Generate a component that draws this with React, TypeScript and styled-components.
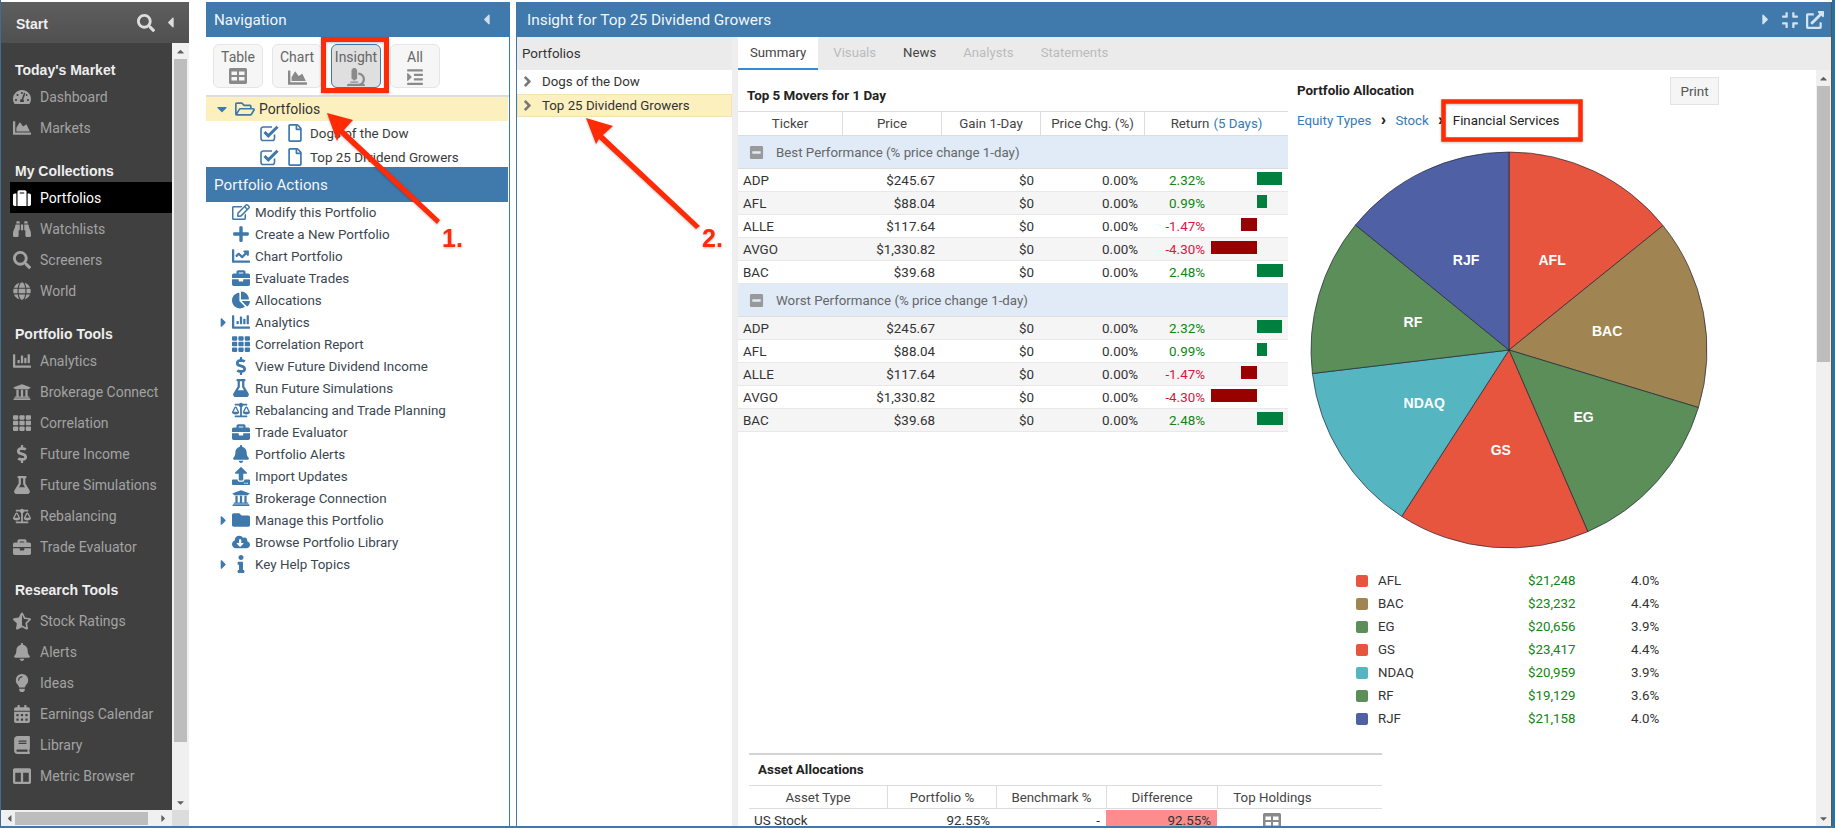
import React from 'react';
import styled, {createGlobalStyle} from 'styled-components';
import {
    FaBalanceScale, FaBell, FaBinoculars, FaBook, FaBriefcase, FaCalendarAlt, FaCaretDown, FaCaretLeft, FaCaretRight,
    FaCaretUp, FaChartArea, FaChartBar, FaChartLine, FaChartPie, FaAngleRight, FaCloudDownloadAlt, FaColumns, FaCompress,
    FaDollarSign, FaExternalLinkAlt, FaFlask, FaFolder, FaGlobe, FaIndent, FaInfo, FaLightbulb, FaMicroscope,
    FaMinusSquare, FaPlus, FaRegEdit, FaRegFile, FaRegFolderOpen, FaSearch, FaStarHalfAlt, FaSuitcase,
    FaTachometerAlt, FaTh, FaUniversity, FaUpload,
} from 'react-icons/fa';

const TableIcon = ({size = 18}: {size?: number}) => (
    <svg width={size} height={size * 0.89} viewBox="0 0 18 16" fill="currentColor">
        <path
            fillRule="evenodd"
            d="M1.5 0h15A1.5 1.5 0 0 1 18 1.5v13a1.5 1.5 0 0 1-1.5 1.5h-15A1.5 1.5 0 0 1 0 14.5v-13A1.5 1.5 0 0 1 1.5 0zM2.5 3.5v3.5h5.5v-3.5zM10 3.5v3.5h5.5v-3.5zM2.5 9v3.5h5.5V9zM10 9v3.5h5.5V9z"
        />
    </svg>
);

// the old open-cornered check box, the package only has the closed one
const CheckBoxIcon = () => (
    <svg width="19" height="18" viewBox="0 0 19 18" fill="none" stroke="currentColor">
        <path strokeWidth="1.6" d="M14.5 10.5v3.7a2.3 2.3 0 0 1-2.3 2.300H3.300A2.300 2.300 0 0 1 1 14.200V5.300A2.300 2.300 0 0 1 3.300 3H12"/>
        <path strokeWidth="3" d="M4.500 8l3.800 3.800L17.500 2.800"/>
    </svg>
);

const sideSections = [
    {title: "Today's Market", items: [['Dashboard', FaTachometerAlt], ['Markets', FaChartArea]]},
    {
        title: 'My Collections',
        items: [['Portfolios', FaSuitcase], ['Watchlists', FaBinoculars], ['Screeners', FaSearch], ['World', FaGlobe]],
    },
    {
        title: 'Portfolio Tools',
        items: [
            ['Analytics', FaChartBar], ['Brokerage Connect', FaUniversity], ['Correlation', FaTh],
            ['Future Income', FaDollarSign], ['Future Simulations', FaFlask], ['Rebalancing', FaBalanceScale],
            ['Trade Evaluator', FaBriefcase],
        ],
    },
    {
        title: 'Research Tools',
        items: [
            ['Stock Ratings', FaStarHalfAlt], ['Alerts', FaBell], ['Ideas', FaLightbulb],
            ['Earnings Calendar', FaCalendarAlt], ['Library', FaBook], ['Metric Browser', FaColumns],
        ],
    },
] as {title: string; items: [string, React.ComponentType][]}[];

const actions = [
    ['Modify this Portfolio', FaRegEdit, false],
    ['Create a New Portfolio', FaPlus, false],
    ['Chart Portfolio', FaChartLine, false],
    ['Evaluate Trades', FaBriefcase, false],
    ['Allocations', FaChartPie, false],
    ['Analytics', FaChartBar, true],
    ['Correlation Report', FaTh, false],
    ['View Future Dividend Income', FaDollarSign, false],
    ['Run Future Simulations', FaFlask, false],
    ['Rebalancing and Trade Planning', FaBalanceScale, false],
    ['Trade Evaluator', FaBriefcase, false],
    ['Portfolio Alerts', FaBell, false],
    ['Import Updates', FaUpload, false],
    ['Brokerage Connection', FaUniversity, false],
    ['Manage this Portfolio', FaFolder, true],
    ['Browse Portfolio Library', FaCloudDownloadAlt, false],
    ['Key Help Topics', FaInfo, true],
] as [string, React.ComponentType, boolean][];

const movers = [
    ['ADP', '$245.67', 2.32],
    ['AFL', '$88.04', 0.99],
    ['ALLE', '$117.64', -1.47],
    ['AVGO', '$1,330.82', -4.3],
    ['BAC', '$39.68', 2.48],
] as [string, string, number][];

const slices = [
    {name: 'AFL', value: 21248, amount: '$21,248', pct: '4.0%', color: '#e8553e'},
    {name: 'BAC', value: 23232, amount: '$23,232', pct: '4.4%', color: '#a08552'},
    {name: 'EG', value: 20656, amount: '$20,656', pct: '3.9%', color: '#5c8e5a'},
    {name: 'GS', value: 23417, amount: '$23,417', pct: '4.4%', color: '#e8553e'},
    {name: 'NDAQ', value: 20959, amount: '$20,959', pct: '3.9%', color: '#55b5c0'},
    {name: 'RF', value: 19129, amount: '$19,129', pct: '3.6%', color: '#5c8e5a'},
    {name: 'RJF', value: 21158, amount: '$21,158', pct: '4.0%', color: '#5060a5'},
];

const PieChart = () => {
    const total = slices.reduce((sum, s) => sum + s.value, 0);
    const radius = 198;
    const center = 201;
    let start = 0;
    return (
        <PieSvg viewBox="0 0 402 402">
            {slices.map((s) => {
                const sweep = (s.value / total) * Math.PI * 2;
                const end = start + sweep;
                const mid = start + sweep / 2;
                const x1 = center + radius * Math.sin(start);
                const y1 = center - radius * Math.cos(start);
                const x2 = center + radius * Math.sin(end);
                const y2 = center - radius * Math.cos(end);
                start = end;
                return (
                    <g key={s.name}>
                        <path
                            d={`M${center} ${center}L${x1} ${y1}A${radius} ${radius} 0 0 1 ${x2} ${y2}Z`}
                            fill={s.color}
                            stroke="rgba(30,30,50,.65)"
                            strokeWidth="1"
                        />
                        <PieLabel x={center + 100 * Math.sin(mid)} y={center - 100 * Math.cos(mid) + 5}>
                            {s.name}
                        </PieLabel>
                    </g>
                );
            })}
        </PieSvg>
    );
};

const MoverRows = ({startShaded}: {startShaded: boolean}) => (
    <>
        {movers.map(([ticker, price, change], i) => (
            <DataRow key={ticker} $shaded={i % 2 === 0 ? startShaded : !startShaded}>
                <TickerCell>{ticker}</TickerCell>
                <NumCell>{price}</NumCell>
                <NumCell>$0</NumCell>
                <NumCell>0.00%</NumCell>
                <ReturnCell>
                    <ReturnValue $negative={change < 0}>{change.toFixed(2)}%</ReturnValue>
                    <BarSide $left>{change < 0 && <Bar $negative style={{width: -change * 10.7}}/>}</BarSide>
                    <BarSide>{change > 0 && <Bar style={{width: change * 10.6}}/>}</BarSide>
                </ReturnCell>
            </DataRow>
        ))}
    </>
);

const App = () => {
    return (
        <Root>
            <GlobalStyle/>
            <Sidebar>
                <SideHeader>
                    <StartLabel>Start</StartLabel>
                    <FaSearch size={18}/>
                    <SideCollapse><FaCaretLeft size={17}/></SideCollapse>
                </SideHeader>
                <SideBody>
                    <SideList>
                        {sideSections.map((section, i) => (
                            <SideSection key={section.title}>
                                <SideTitle $tall={i === 3}>{section.title}</SideTitle>
                                {section.items.map(([label, Icon]) => (
                                    <SideItem key={label} $active={label === 'Portfolios'}>
                                        <SideIcon><Icon/></SideIcon>
                                        {label}
                                    </SideItem>
                                ))}
                            </SideSection>
                        ))}
                    </SideList>
                    <VScroll>
                        <ScrollArrow><FaCaretUp size={11}/></ScrollArrow>
                        <SideThumb/>
                        <ScrollArrow><FaCaretDown size={11}/></ScrollArrow>
                    </VScroll>
                </SideBody>
                <HScroll>
                    <HTrack>
                        <FaCaretLeft size={11}/>
                        <HThumb/>
                        <FaCaretRight size={11}/>
                    </HTrack>
                    <ScrollCorner/>
                </HScroll>
            </Sidebar>

            <NavPanel>
                <NavHeader>
                    Navigation
                    <HeaderCaret><FaCaretLeft size={17}/></HeaderCaret>
                </NavHeader>
                <ViewButtons>
                    <ViewButton>Table<TableIcon/></ViewButton>
                    <ViewButton>Chart<FaChartArea size={19}/></ViewButton>
                    <ViewButton $active>Insight<FaMicroscope size={18}/></ViewButton>
                    <ViewButton>All<FaIndent size={18}/></ViewButton>
                </ViewButtons>
                <TreeRoot>
                    <TreeCaret><FaCaretDown size={16}/></TreeCaret>
                    <FaRegFolderOpen size={20}/>
                    <span>Portfolios</span>
                </TreeRoot>
                <TreeChildren>
                    <TreeChild><CheckBoxIcon/><FaRegFile size={18}/><span>Dogs of the Dow</span></TreeChild>
                    <TreeChild><CheckBoxIcon/><FaRegFile size={18}/><span>Top 25 Dividend Growers</span></TreeChild>
                </TreeChildren>
                <ActionsHeader>Portfolio Actions</ActionsHeader>
                <ActionList>
                    {actions.map(([label, Icon, expandable]) => (
                        <ActionRow key={label}>
                            <ActionCaret>{expandable && <FaCaretRight size={15}/>}</ActionCaret>
                            <ActionIcon><Icon/></ActionIcon>
                            {label}
                        </ActionRow>
                    ))}
                </ActionList>
            </NavPanel>

            <MainPanel>
                <MainHeader>
                    Insight for Top 25 Dividend Growers
                    <MainHeaderIcons>
                        <FaCaretRight size={17}/>
                        <FaCompress size={18}/>
                        <FaExternalLinkAlt size={18}/>
                    </MainHeaderIcons>
                </MainHeader>
                <MainRow>
                    <SubPanel>
                        <SubHeader>Portfolios</SubHeader>
                        <SubRow><FaAngleRight size={17}/>Dogs of the Dow</SubRow>
                        <SubRow $selected><FaAngleRight size={17}/>Top 25 Dividend Growers</SubRow>
                    </SubPanel>
                    <Splitter/>
                    <ContentColumn>
                        <Tabs>
                            <Tab $state="active">Summary</Tab>
                            <Tab $state="disabled">Visuals</Tab>
                            <Tab>News</Tab>
                            <Tab $state="disabled">Analysts</Tab>
                            <Tab $state="disabled">Statements</Tab>
                        </Tabs>
                        <ContentBody>
                            <ContentScroll>
                                <TopRow>
                                    <MoversColumn>
                                        <SectionTitle>Top 5 Movers for 1 Day</SectionTitle>
                                        <HeadRow>
                                            <HeadCell>Ticker</HeadCell>
                                            <HeadCell>Price</HeadCell>
                                            <HeadCell>Gain 1-Day</HeadCell>
                                            <HeadCell>Price Chg. (%)</HeadCell>
                                            <HeadCell>Return <LinkText>(5 Days)</LinkText></HeadCell>
                                        </HeadRow>
                                        <GroupRow><FaMinusSquare size={15}/>Best Performance (% price change 1-day)</GroupRow>
                                        <MoverRows startShaded={false}/>
                                        <GroupRow><FaMinusSquare size={15}/>Worst Performance (% price change 1-day)</GroupRow>
                                        <MoverRows startShaded/>
                                    </MoversColumn>
                                    <AllocationColumn>
                                        <AllocationTop>
                                            <AllocationTitle>Portfolio Allocation</AllocationTitle>
                                            <PrintButton>Print</PrintButton>
                                        </AllocationTop>
                                        <Crumbs>
                                            <LinkText>Equity Types</LinkText>
                                            <CrumbSep>›</CrumbSep>
                                            <LinkText>Stock</LinkText>
                                            <CrumbSep>›</CrumbSep>
                                            <span>Financial Services</span>
                                        </Crumbs>
                                        <PieChart/>
                                        <Legend>
                                            {slices.map((s) => (
                                                <LegendRow key={s.name}>
                                                    <Swatch $color={s.color}/>
                                                    <span>{s.name}</span>
                                                    <LegendAmount>{s.amount}</LegendAmount>
                                                    <span>{s.pct}</span>
                                                </LegendRow>
                                            ))}
                                        </Legend>
                                    </AllocationColumn>
                                </TopRow>
                                <AssetBlock>
                                    <AssetTitle>Asset Allocations</AssetTitle>
                                    <AssetHead>
                                        <HeadCell>Asset Type</HeadCell>
                                        <HeadCell>Portfolio %</HeadCell>
                                        <HeadCell>Benchmark %</HeadCell>
                                        <HeadCell>Difference</HeadCell>
                                        <HeadCell>Top Holdings</HeadCell>
                                    </AssetHead>
                                    <AssetRow>
                                        <TickerCell>US Stock</TickerCell>
                                        <NumCell>92.55%</NumCell>
                                        <NumCell>-</NumCell>
                                        <DiffCell>92.55%</DiffCell>
                                        <HoldingsCell><TableIcon/></HoldingsCell>
                                    </AssetRow>
                                </AssetBlock>
                            </ContentScroll>
                            <MainScroll>
                                <ScrollArrow><FaCaretUp size={11}/></ScrollArrow>
                                <MainThumb/>
                                <ScrollGap/>
                                <ScrollArrow><FaCaretDown size={11}/></ScrollArrow>
                            </MainScroll>
                        </ContentBody>
                    </ContentColumn>
                </MainRow>
            </MainPanel>

            <Annotations viewBox="0 0 1835 828">
                <rect x="323.5" y="39.5" width="63" height="51" fill="none" stroke="#ff2a06" strokeWidth="5"/>
                <rect x="1443.5" y="101.5" width="137" height="38" fill="none" stroke="#ff2a06" strokeWidth="4.5"/>
                <polygon points="327,113 353,120 344,130 440,220 437,224 340,134 337,141" fill="#ff2a06"/>
                <polygon points="586,118 613,126 603,135 700,226 696,229 599,139 596,144" fill="#ff2a06"/>
                <AnnotationLabel x="442" y="247">1.</AnnotationLabel>
                <AnnotationLabel x="702" y="247">2.</AnnotationLabel>
            </Annotations>
        </Root>
    );
};

export default App;

const GlobalStyle = createGlobalStyle`
  html, body {
    margin: 0;
    padding: 0;
    background: #fff;
  }
  * {
    box-sizing: border-box;
  }
`;

const Root = styled.div`
  position: relative;
  width: 1835px;
  height: 828px;
  display: flex;
  padding-top: 2px;
  border-left: 1px solid #3a7090;
  border-right: 3px solid #2f7095;
  border-bottom: 2px solid #3f78ab;
  overflow: hidden;
  font-family: Roboto, "Liberation Sans", sans-serif;
  font-size: 13px;
  color: #333;
  background: #fff;
`;

const Sidebar = styled.div`
  width: 188px;
  flex: none;
  display: flex;
  flex-direction: column;
  background: #404040;
`;

const SideHeader = styled.div`
  height: 41px;
  flex: none;
  display: flex;
  align-items: center;
  padding: 0 10px 0 15px;
  background: linear-gradient(#5e5e5e, #505050);
  color: #ddd;
`;

const StartLabel = styled.div`
  flex: 1;
  font-family: "Liberation Sans", sans-serif;
  font-size: 14px;
  font-weight: 700;
  color: #eee;
  padding-top: 2px;
`;

const SideCollapse = styled.span`
  display: flex;
  margin-left: 7px;
`;

const SideBody = styled.div`
  flex: 1;
  min-height: 0;
  display: flex;
`;

const SideList = styled.div`
  width: 171px;
  flex: none;
  padding-top: 15px;
  overflow: hidden;
`;

const SideSection = styled.div`
  margin-bottom: 16px;
`;

const SideTitle = styled.div<{$tall?: boolean}>`
  height: ${(p) => (p.$tall ? 27 : 23)}px;
  padding: ${(p) => (p.$tall ? '0 0 4px 14px' : '0 0 0 14px')};
  display: flex;
  align-items: center;
  font-family: "Liberation Sans", sans-serif;
  font-size: 14px;
  font-weight: 700;
  color: #eee;
`;

const SideItem = styled.div<{$active?: boolean}>`
  height: 31px;
  margin-left: ${(p) => (p.$active ? 9 : 0)}px;
  padding-left: ${(p) => (p.$active ? 3 : 12)}px;
  display: flex;
  align-items: center;
  font-size: 14px;
  white-space: nowrap;
  color: ${(p) => (p.$active ? '#fff' : '#a3a3a3')};
  background: ${(p) => (p.$active ? '#000' : 'transparent')};
`;

const SideIcon = styled.span`
  width: 18px;
  margin-right: 9px;
  display: flex;
  justify-content: center;
  font-size: 18px;
  svg {
    flex: none;
  }
`;

const VScroll = styled.div`
  width: 17px;
  flex: none;
  display: flex;
  flex-direction: column;
  align-items: center;
  background: #f0f0f0;
`;

const ScrollArrow = styled.div`
  height: 16px;
  flex: none;
  display: flex;
  align-items: center;
  justify-content: center;
  color: #606060;
`;

const SideThumb = styled.div`
  width: 13px;
  flex: 1;
  margin-bottom: 52px;
  background: #bdbdbd;
`;

const HScroll = styled.div`
  height: 16px;
  flex: none;
  display: flex;
`;

const HTrack = styled.div`
  width: 171px;
  display: flex;
  align-items: center;
  justify-content: space-between;
  padding: 0 3px;
  color: #606060;
  background: #f0f0f0;
`;

const HThumb = styled.div`
  width: 136px;
  height: 13px;
  margin-right: 10px;
  background: #bdbdbd;
`;

const ScrollCorner = styled.div`
  width: 17px;
  background: #dcdcdc;
`;

const NavPanel = styled.div`
  width: 304px;
  flex: none;
  margin-left: 17px;
  display: flex;
  flex-direction: column;
  border-right: 1px solid #3f78ab;
`;

const PanelHeader = styled.div`
  height: 35px;
  flex: none;
  display: flex;
  align-items: center;
  justify-content: space-between;
  padding: 0 10px;
  font-size: 15.2px;
  color: #f2f6fa;
  background: #4079ab;
`;

const NavHeader = styled(PanelHeader)`
  padding-left: 8px;
`;

const MainHeader = styled(PanelHeader)`
  font-size: 15.4px;
`;

const HeaderCaret = styled.span`
  display: flex;
  margin-right: 4px;
  color: #cfdeec;
`;

const ViewButtons = styled.div`
  height: 60px;
  flex: none;
  display: flex;
  gap: 9px;
  padding: 7px 0 0 7px;
  border-bottom: 2px solid #ddd;
`;

const ViewButton = styled.div<{$active?: boolean}>`
  width: 50px;
  height: 44px;
  display: flex;
  flex-direction: column;
  align-items: center;
  gap: 3px;
  padding-top: 4px;
  font-size: 14px;
  line-height: 16px;
  color: #666;
  border-radius: 6px;
  border: 1px solid ${(p) => (p.$active ? '#3f78ab' : '#e5e5e5')};
  background: ${(p) => (p.$active ? '#dfdfdf' : '#f6f6f6')};
  svg {
    color: #8a8a8a;
  }
`;

const TreeRoot = styled.div`
  height: 24px;
  flex: none;
  display: flex;
  align-items: center;
  padding-left: 4px;
  font-size: 14px;
  color: #333;
  background: #fdf0bf;
  margin-right: 1px;
  svg {
    color: #3f78ab;
  }
  span {
    margin-left: 4px;
  }
`;

const TreeCaret = styled.span`
  display: flex;
  width: 21px;
`;

const TreeChildren = styled.div`
  height: 46px;
  flex: none;
`;

const TreeChild = styled.div`
  height: 24px;
  display: flex;
  align-items: center;
  padding-left: 54px;
  font-size: 13.4px;
  color: #3a3a3a;
  svg {
    color: #3f78ab;
  }
  svg + svg {
    margin-left: 7px;
  }
  span {
    margin-left: 6px;
  }
`;

const ActionsHeader = styled(NavHeader)`
  margin-right: 1px;
`;

const ActionList = styled.div`
  margin-top: -1px;
`;

const ActionRow = styled.div`
  height: 22px;
  display: flex;
  align-items: center;
  padding-left: 10px;
  font-size: 13.4px;
  color: #3a4650;
  white-space: nowrap;
`;

const ActionCaret = styled.span`
  width: 15px;
  display: flex;
  color: #3f78ab;
`;

const ActionIcon = styled.span`
  width: 19px;
  margin-right: 5px;
  display: flex;
  justify-content: center;
  font-size: 18px;
  color: #3f78ab;
  svg {
    flex: none;
  }
`;

const MainPanel = styled.div`
  flex: 1;
  min-width: 0;
  margin-left: 6px;
  display: flex;
  flex-direction: column;
  border-left: 1px solid #3f78ab;
  border-right: 1px solid #555;
`;

const MainHeaderIcons = styled.div`
  display: flex;
  align-items: center;
  gap: 7px;
  margin-right: -3px;
  color: #d5e2ef;
`;

const MainRow = styled.div`
  flex: 1;
  min-height: 0;
  display: flex;
`;

const SubPanel = styled.div`
  width: 215px;
  flex: none;
`;

const SubHeader = styled.div`
  height: 33px;
  display: flex;
  align-items: center;
  padding: 0 0 1px 5px;
  font-size: 13.4px;
  color: #333;
  background: #ebebeb;
`;

const SubRow = styled.div<{$selected?: boolean}>`
  height: 23.5px;
  display: flex;
  align-items: center;
  gap: 6px;
  padding-left: 2px;
  font-size: 13.3px;
  color: #333;
  background: ${(p) => (p.$selected ? '#fdf0bf' : '#fff')};
  ${(p) => (p.$selected ? 'box-shadow: inset 0 0 0 1px #f3e3ae;' : '')}
  svg {
    color: #777;
  }
`;

const Splitter = styled.div`
  width: 6px;
  flex: none;
  background: #eee;
`;

const ContentColumn = styled.div`
  flex: 1;
  min-width: 0;
  display: flex;
  flex-direction: column;
`;

const Tabs = styled.div`
  height: 33px;
  flex: none;
  display: flex;
  gap: 3px;
  background: #ebebeb;
`;

const Tab = styled.div<{$state?: 'active' | 'disabled'}>`
  display: flex;
  align-items: center;
  padding: 0 12px;
  font-size: 13.2px;
  color: ${(p) => (p.$state === 'disabled' ? '#bbb' : '#444')};
  background: ${(p) => (p.$state === 'active' ? '#fff' : 'transparent')};
  border-bottom: 2px solid ${(p) => (p.$state === 'active' ? '#2e8be0' : 'transparent')};
`;

const ContentBody = styled.div`
  flex: 1;
  min-height: 0;
  display: flex;
`;

const ContentScroll = styled.div`
  flex: 1;
  min-width: 0;
  overflow: hidden;
`;

const TopRow = styled.div`
  height: 683px;
  display: flex;
`;

const MoversColumn = styled.div`
  width: 550px;
  flex: none;
`;

const SectionTitle = styled.div`
  height: 41px;
  padding: 9px 0 0 9px;
  display: flex;
  align-items: center;
  font-size: 13.4px;
  font-weight: 700;
  color: #222;
`;

const HeadRow = styled.div`
  height: 25px;
  display: grid;
  grid-template-columns: 104px 99px 99px 104px 1fr;
  border-top: 1px solid #ddd;
  border-bottom: 1px solid #ddd;
`;

const HeadCell = styled.div`
  display: flex;
  align-items: center;
  justify-content: center;
  gap: 4px;
  font-size: 13.3px;
  color: #444;
  & + & {
    border-left: 1px solid #ddd;
  }
`;

const LinkText = styled.span`
  color: #337ab7;
`;

const GroupRow = styled.div`
  height: 33px;
  display: flex;
  align-items: center;
  gap: 12px;
  padding-left: 11px;
  font-size: 13.3px;
  color: #666;
  background: #e0ebf7;
  border-bottom: 1px solid #ddd;
  svg {
    color: #999;
  }
`;

const DataRow = styled.div<{$shaded: boolean}>`
  height: 23px;
  display: grid;
  grid-template-columns: 104px 99px 99px 104px 1fr;
  font-size: 13.4px;
  color: #333;
  background: ${(p) => (p.$shaded ? '#f5f5f5' : '#fff')};
  border-bottom: 1px solid #e8e8e8;
`;

const TickerCell = styled.div`
  display: flex;
  align-items: center;
  padding-left: 5px;
`;

const NumCell = styled.div`
  display: flex;
  align-items: center;
  justify-content: flex-end;
  padding-right: 6px;
`;

const ReturnCell = styled.div`
  display: flex;
`;

const ReturnValue = styled.div<{$negative: boolean}>`
  width: 61px;
  flex: none;
  display: flex;
  align-items: center;
  justify-content: flex-end;
  color: ${(p) => (p.$negative ? '#dc143c' : '#118511')};
`;

const BarSide = styled.div<{$left?: boolean}>`
  width: ${(p) => (p.$left ? 52 : 31)}px;
  flex: none;
  display: flex;
  justify-content: ${(p) => (p.$left ? 'flex-end' : 'flex-start')};
`;

const Bar = styled.div<{$negative?: boolean}>`
  height: 13px;
  margin-top: 3px;
  background: ${(p) => (p.$negative ? '#990000' : '#00803f')};
`;

const AllocationColumn = styled.div`
  flex: 1;
  min-width: 0;
  padding: 7px 0 0 9px;
`;

const AllocationTop = styled.div`
  width: 422px;
  display: flex;
  align-items: flex-start;
  justify-content: space-between;
`;

const AllocationTitle = styled.div`
  font-size: 13.4px;
  font-weight: 700;
  color: #222;
  line-height: 28px;
`;

const PrintButton = styled.div`
  width: 49px;
  height: 28px;
  display: flex;
  align-items: center;
  justify-content: center;
  font-size: 13.5px;
  color: #555;
  background: #f5f5f5;
  border: 1px solid #e3e3e3;
`;

const Crumbs = styled.div`
  height: 30px;
  display: flex;
  align-items: center;
  font-size: 13.3px;
  color: #222;
`;

const CrumbSep = styled.span`
  width: 24px;
  text-align: center;
  font-family: "Liberation Sans", sans-serif;
  font-weight: 700;
  font-size: 16px;
  color: #222;
`;

const PieSvg = styled.svg`
  display: block;
  width: 402px;
  height: 402px;
  margin: 14px 0 0 11px;
`;

const PieLabel = styled.text`
  font-family: "Liberation Sans", sans-serif;
  font-size: 14px;
  font-weight: 700;
  fill: #fff;
  text-anchor: middle;
`;

const Legend = styled.div`
  margin: 18px 0 0 59px;
`;

const LegendRow = styled.div`
  height: 23px;
  display: grid;
  grid-template-columns: 22px 150px 103px auto;
  align-items: center;
  justify-content: start;
  font-size: 13.3px;
  color: #333;
`;

const Swatch = styled.span<{$color: string}>`
  width: 12px;
  height: 12px;
  border-radius: 2px;
  background: ${(p) => p.$color};
`;

const LegendAmount = styled.span`
  color: #118511;
`;

const AssetBlock = styled.div`
  width: 633px;
  margin-left: 11px;
  border-top: 2px solid #d4d4d4;
`;

const AssetTitle = styled.div`
  height: 28px;
  margin-bottom: 2px;
  padding-left: 9px;
  display: flex;
  align-items: center;
  font-size: 13.4px;
  font-weight: 700;
  color: #222;
`;

const AssetHead = styled.div`
  height: 24px;
  display: grid;
  grid-template-columns: 138px 109px 110px 111px 110px 1fr;
  border-top: 1px solid #ddd;
  border-bottom: 1px solid #ddd;
`;

const AssetRow = styled.div`
  height: 16px;
  margin-top: 1px;
  display: grid;
  grid-template-columns: 138px 109px 110px 111px 110px 1fr;
  font-size: 13.4px;
  line-height: 16px;
  color: #333;
  > div {
    padding-top: 3px;
  }
`;

const DiffCell = styled(NumCell)`
  background: #ff8c8c;
`;

const HoldingsCell = styled.div`
  display: flex;
  justify-content: center;
  color: #8a8a8a;
`;

const MainScroll = styled.div`
  width: 15px;
  flex: none;
  display: flex;
  flex-direction: column;
  align-items: center;
  background: #f0f0f0;
`;

const MainThumb = styled.div`
  width: 13px;
  height: 276px;
  flex: none;
  background: #bdbdbd;
`;

const ScrollGap = styled.div`
  flex: 1;
`;

const Annotations = styled.svg`
  position: absolute;
  top: 0;
  left: -1px;
  width: 1835px;
  height: 828px;
  pointer-events: none;
  filter: drop-shadow(0 1px 1px rgba(0, 0, 0, .25));
`;

const AnnotationLabel = styled.text`
  font-family: "Liberation Sans", sans-serif;
  font-size: 25px;
  font-weight: 700;
  fill: #ff2a06;
`;
